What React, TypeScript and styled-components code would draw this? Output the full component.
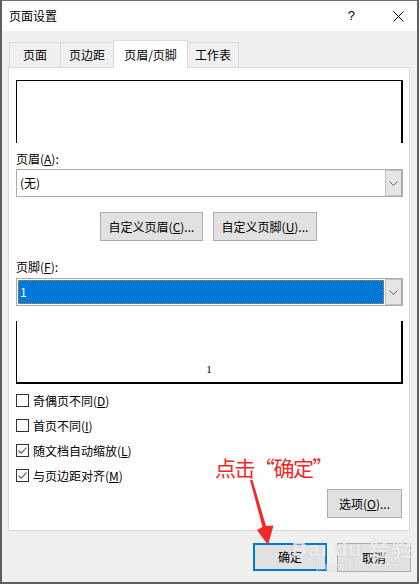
import React from "react";
import styled, { createGlobalStyle } from "styled-components";

const Global = createGlobalStyle`
  html, body { margin: 0; padding: 0; background: #ffffff; }
  body { font-family: "Noto Sans CJK SC", "Noto Sans", sans-serif; font-size: 12px; color: #000; }
  * { box-sizing: border-box; }
`;

const Window = styled.div`
  position: relative;
  width: 419px;
  height: 584px;
  display: flex;
  flex-direction: column;
  border-top: 1px solid #707070;
  border-left: 2px solid #5e5e5e;
  border-right: 2px solid #5e5e5e;
  border-bottom: 2px solid #5e5e5e;
  overflow: hidden;
`;

const TitleBar = styled.div`
  height: 30px;
  flex: none;
  background: #ffffff;
  display: flex;
  align-items: center;
  padding-left: 7px;
  font-size: 12px;
  line-height: 16px;
`;

const TitleText = styled.div`
  flex: 1;
`;

const TitleButtons = styled.div`
  display: flex;
  align-items: center;
  gap: 38px;
  padding-right: 13px;
`;

const HelpMark = styled.span`
  font-family: "Liberation Sans", sans-serif;
  font-size: 13px;
  color: #000;
`;

const Body = styled.div`
  flex: 1;
  background: #f0f0f0;
  padding: 9px 6px 0 6px;
  display: flex;
  flex-direction: column;
`;

const TabStrip = styled.div`
  display: flex;
  align-items: flex-end;
  height: 27px;
  padding-left: 1px;
`;

const Tab = styled.div<{ $w: number; $active?: boolean }>`
  width: ${(p) => p.$w}px;
  height: ${(p) => (p.$active ? 28 : 25)}px;
  margin-right: -1px;
  margin-bottom: ${(p) => (p.$active ? -1 : 0)}px;
  border: 1px solid #d9d9d9;
  border-bottom: none;
  background: ${(p) => (p.$active ? "#ffffff" : "#f0f0f0")};
  position: relative;
  z-index: ${(p) => (p.$active ? 2 : 1)};
  display: flex;
  justify-content: center;
  align-items: center;
  padding-top: ${(p) => (p.$active ? 1 : 0)}px;
  line-height: 16px;
`;

const Panel = styled.div`
  width: 402px;
  height: 464px;
  border: 1px solid #d9d9d9;
  background: #ffffff;
  padding: 0 6px 0 7px;
  display: flex;
  flex-direction: column;
`;

const HeaderPreview = styled.div`
  margin-top: 12px;
  height: 63px;
  border-top: 1px solid #000;
  border-left: 1px solid #000;
  border-right: 2px solid #000;
`;

const FooterPreview = styled.div`
  margin-top: 15px;
  height: 63px;
  border-left: 1px solid #000;
  border-right: 2px solid #000;
  border-bottom: 2px solid #000;
  display: flex;
  align-items: flex-end;
  justify-content: center;
  padding-bottom: 7px;
  font-family: "Liberation Serif", serif;
  font-size: 11px;
  line-height: 12px;
`;

const FieldLabel = styled.div<{ $mt: number }>`
  margin-top: ${(p) => p.$mt}px;
  height: 18px;
  line-height: 18px;
`;

const U = styled.span`
  text-decoration: underline;
  text-underline-offset: 1px;
`;

const Select = styled.div<{ $mt: number }>`
  margin-top: ${(p) => p.$mt}px;
  height: 28px;
  border: 1px solid #acacac;
  display: flex;
  align-items: stretch;
  background: #fff;
`;

const SelectValue = styled.div<{ $selected?: boolean }>`
  flex: 1;
  display: flex;
  align-items: center;
  padding-left: ${(p) => (p.$selected ? 2 : 3)}px;
  margin: ${(p) => (p.$selected ? "1px" : "0")};
  background: ${(p) => (p.$selected ? "#0078d7" : "transparent")};
  color: ${(p) => (p.$selected ? "#fff" : "#000")};
  outline: ${(p) => (p.$selected ? "1px dotted #c08040" : "none")};
  outline-offset: -1px;
  line-height: 16px;
`;

const SelectButton = styled.div`
  width: 17px;
  background: #e5e5e5;
  border: 1px solid #c4c4c4;
  border-right: 1px solid #acacac;
  display: flex;
  align-items: center;
  justify-content: center;
`;

const ButtonRow = styled.div`
  margin-top: 15px;
  display: flex;
  justify-content: center;
  gap: 10px;
  padding-right: 2px;
`;

const Button = styled.div<{ $w: number; $primary?: boolean }>`
  width: ${(p) => p.$w}px;
  height: ${(p) => (p.$primary ? 28 : 29)}px;
  background: #e1e1e1;
  border: ${(p) => (p.$primary ? "2px solid #0078d7" : "1px solid #adadad")};
  display: flex;
  align-items: center;
  justify-content: center;
  line-height: 16px;
`;

const CheckList = styled.div`
  margin-top: 4px;
  display: flex;
  flex-direction: column;
`;

const CheckRow = styled.div`
  height: 25px;
  display: flex;
  align-items: center;
  gap: 4px;
  line-height: 16px;
`;

const Box = styled.div`
  width: 13px;
  height: 13px;
  border: 1px solid #333;
  background: #fff;
  display: flex;
  align-items: center;
  justify-content: center;
`;

const OptionsRow = styled.div`
  margin-top: 1px;
  display: flex;
  justify-content: flex-end;
  padding-right: 1px;
`;

const BottomRow = styled.div`
  margin-top: 12px;
  display: flex;
  justify-content: flex-end;
  gap: 10px;
`;

const Annotation = styled.div`
  position: absolute;
  left: 215px;
  top: 456px;
  color: #f42828;
  font-size: 21px;
  line-height: 22px;
  font-family: "Noto Sans CJK SC", sans-serif;
  letter-spacing: -1.5px;
  z-index: 5;
`;

const Arrow = styled.svg`
  position: absolute;
  left: 0;
  top: 0;
  width: 419px;
  height: 584px;
  pointer-events: none;
  z-index: 5;
`;

const Watermark = styled.div`
  position: absolute;
  left: 290px;
  top: 537px;
  z-index: 4;
  color: rgba(255, 255, 255, 0.7);
  text-shadow: 0 0 1px rgba(160, 160, 160, 0.5);
  font-family: "Liberation Sans", "Noto Sans CJK SC", sans-serif;
  line-height: 1;
  pointer-events: none;
`;

const WmBig = styled.div`
  font-size: 21px;
  font-weight: bold;
  letter-spacing: 1px;
`;

const WmSmall = styled.div`
  font-size: 11px;
  margin-top: 2px;
  padding-left: 24px;
`;

const Chevron = () => (
  <svg width="9" height="5" viewBox="0 0 9 5">
    <path d="M0.5 0.5 L4.5 4.5 L8.5 0.5" fill="none" stroke="#606060" strokeWidth="1" />
  </svg>
);

const Check = () => (
  <svg width="11" height="11" viewBox="0 0 11 11">
    <path d="M1.5 5.5 L4.2 8.2 L9.5 2.5" fill="none" stroke="#555" strokeWidth="1.1" />
  </svg>
);

const CloseIcon = () => (
  <svg width="11" height="11" viewBox="0 0 11 11">
    <path d="M0.5 0.5 L10.5 10.5 M10.5 0.5 L0.5 10.5" stroke="#000" strokeWidth="1" />
  </svg>
);

const checks: { label: string; key: string; rest: string; checked: boolean }[] = [
  { label: "奇偶页不同(", key: "D", rest: ")", checked: false },
  { label: "首页不同(", key: "I", rest: ")", checked: false },
  { label: "随文档自动缩放(", key: "L", rest: ")", checked: true },
  { label: "与页边距对齐(", key: "M", rest: ")", checked: true },
];

export default function App() {
  return (
    <>
      <Global />
      <Window>
        <TitleBar>
          <TitleText>页面设置</TitleText>
          <TitleButtons>
            <HelpMark>?</HelpMark>
            <CloseIcon />
          </TitleButtons>
        </TitleBar>
        <Body>
          <TabStrip>
            <Tab $w={52}>页面</Tab>
            <Tab $w={54}>页边距</Tab>
            <Tab $w={75} $active>
              页眉/页脚
            </Tab>
            <Tab $w={52}>工作表</Tab>
          </TabStrip>
          <Panel>
            <HeaderPreview />
            <FieldLabel $mt={7}>
              页眉(<U>A</U>):
            </FieldLabel>
            <Select $mt={1}>
              <SelectValue>(无)</SelectValue>
              <SelectButton>
                <Chevron />
              </SelectButton>
            </Select>
            <ButtonRow>
              <Button $w={103}>
                自定义页眉(<U>C</U>)...
              </Button>
              <Button $w={104}>
                自定义页脚(<U>U</U>)...
              </Button>
            </ButtonRow>
            <FieldLabel $mt={17}>
              页脚(<U>F</U>):
            </FieldLabel>
            <Select $mt={2}>
              <SelectValue $selected>1</SelectValue>
              <SelectButton>
                <Chevron />
              </SelectButton>
            </Select>
            <FooterPreview>1</FooterPreview>
            <CheckList>
              {checks.map((c) => (
                <CheckRow key={c.key}>
                  <Box>{c.checked && <Check />}</Box>
                  <span>
                    {c.label}
                    <U>{c.key}</U>
                    {c.rest}
                  </span>
                </CheckRow>
              ))}
            </CheckList>
            <OptionsRow>
              <Button $w={75}>
                选项(<U>O</U>)...
              </Button>
            </OptionsRow>
          </Panel>
          <BottomRow>
            <Button $w={74} $primary>
              确定
            </Button>
            <Button $w={74}>取消</Button>
          </BottomRow>
        </Body>
        <Watermark>
          <WmBig>Bai du 经验</WmBig>
          <WmSmall>jingyan.baidu.com</WmSmall>
        </Watermark>
      </Window>
      <Annotation>点击“确定”</Annotation>
      <Arrow viewBox="0 0 419 584">
        <polygon
          points="250,480 252.5,480 266,526 273.5,525.5 268,545 257,530 262.5,527"
          fill="#f42828"
        />
      </Arrow>
    </>
  );
}
